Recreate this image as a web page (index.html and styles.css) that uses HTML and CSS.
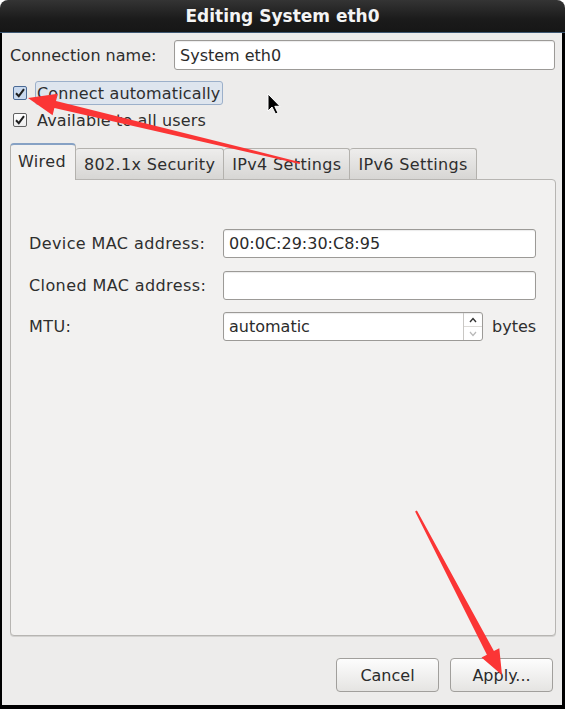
FILE: index.html
```html
<!DOCTYPE html>
<html>
<head>
<meta charset="utf-8">
<link rel="stylesheet" href="styles.css">
</head>
<body>
<div class="window">
  <div class="titlebar">Editing System eth0</div>
  <div class="body">
    <div class="name-row">
      <span class="name-label">Connection name:</span>
      <div class="entry">System eth0</div>
    </div>
    <div class="check-row first">
      <span class="checkbox hl"><svg viewBox="0 0 14 14" width="14" height="14"><path d="M3 7.2 L5.8 10.2 L11 3.2" fill="none" stroke="#1f1f1f" stroke-width="2"/></svg></span>
      <span class="check-label focused">Connect automatically</span>
    </div>
    <div class="check-row">
      <span class="checkbox"><svg viewBox="0 0 14 14" width="14" height="14"><path d="M3 7.2 L5.8 10.2 L11 3.2" fill="none" stroke="#1f1f1f" stroke-width="2"/></svg></span>
      <span class="check-label">Available to all users</span>
    </div>
    <div class="notebook">
      <div class="tabs">
        <div class="tab active">Wired</div>
        <div class="tab">802.1x Security</div>
        <div class="tab">IPv4 Settings</div>
        <div class="tab">IPv6 Settings</div>
      </div>
      <div class="panel">
        <div class="form">
          <span class="flabel">Device MAC address:</span>
          <div class="entry">00:0C:29:30:C8:95</div>
          <span class="flabel">Cloned MAC address:</span>
          <div class="entry"></div>
          <span class="flabel">MTU:</span>
          <div class="mtu">
            <div class="entry spin">
              <span class="spin-text">automatic</span>
              <span class="spin-btns">
                <span class="sb up"><svg viewBox="0 0 10 8" width="10" height="8"><path d="M2 6 L5 2.5 L8 6" fill="none" stroke="#333" stroke-width="1.4"/></svg></span>
                <span class="sb down"><svg viewBox="0 0 10 8" width="10" height="8"><path d="M2 2 L5 5.5 L8 2" fill="none" stroke="#b8b8b8" stroke-width="1.2"/></svg></span>
              </span>
            </div>
            <span class="unit">bytes</span>
          </div>
        </div>
      </div>
    </div>
    <div class="buttons">
      <div class="btn cancel">Cancel</div>
      <div class="btn apply">Apply...</div>
    </div>
  </div>
  <svg class="overlay" viewBox="0 0 565 709" width="565" height="709">
    <polygon fill="#fb3535" points="28,98 57.8,93.8 56,101.1 300.3,162.2 299.7,164 54.4,107.9 52.6,115.2"/>
    <polygon fill="#fb3535" points="502,675 499.3,648.3 493.9,651 416.9,510.5 415.1,511.5 486.9,654.8 481.5,657.5"/>
    <path d="M268 94 L268 111 L272 107 L275.5 114 L278 113 L274.8 106.3 L280 106.3 Z" fill="#000" stroke="#fff" stroke-width="1"/>
  </svg>
</div>
</body>
</html>
```
FILE: styles.css
```css
html, body {
  margin: 0;
  padding: 0;
  background: #ffffff;
}
body {
  font-family: "DejaVu Sans", "Liberation Sans", sans-serif;
  font-size: 16px;
  color: #2e2e2e;
}
.window {
  position: relative;
  width: 565px;
  height: 709px;
  display: flex;
  flex-direction: column;
}
.titlebar {
  height: 33px;
  box-sizing: border-box;
  flex: none;
  border-radius: 8px 8px 0 0;
  background: linear-gradient(#343434, #1b1b1b 60%, #161616);
  color: #f4f4f4;
  font-weight: bold;
  font-size: 17px;
  display: flex;
  align-items: center;
  justify-content: center;
  padding-bottom: 1px;
  border-bottom: 1px solid #3e5873;
}
.body {
  flex: 1;
  display: flex;
  flex-direction: column;
  background: #edeceb;
  border-left: 2px solid #000;
  border-right: 3px solid #000;
  border-bottom: 4px solid #000;
  padding: 7px 6px 0 8px;
  min-height: 0;
}
.name-row {
  display: flex;
  align-items: center;
  height: 30px;
}
.name-label {
  width: 164px;
  flex: none;
}
.entry {
  box-sizing: border-box;
  height: 30px;
  flex: 1;
  background: #fff;
  border: 1px solid #9c9a97;
  border-radius: 3px;
  box-shadow: inset 0 1px 1px rgba(0,0,0,0.08);
  display: flex;
  align-items: center;
  padding-left: 5px;
  color: #2b2b2b;
}
.name-row .entry {
  margin-right: 1px;
}
.check-row {
  display: flex;
  align-items: center;
  height: 24px;
  margin-top: 3px;
  padding-left: 3px;
}
.check-row.first {
  margin-top: 11px;
}
.checkbox {
  width: 14px;
  height: 14px;
  box-sizing: border-box;
  border: 1px solid #616161;
  border-radius: 2px;
  background: linear-gradient(#ffffff, #ededed);
  display: flex;
  align-items: center;
  justify-content: center;
  flex: none;
}
.checkbox svg {
  display: block;
  margin: -1px;
}
.checkbox.hl {
  background: #c9d9ee;
  border-color: #4b6a95;
}
.check-label {
  margin-left: 8px;
  padding: 0 2px 0 1px;
  height: 24px;
  box-sizing: border-box;
  display: flex;
  align-items: center;
  border: 1px solid transparent;
  letter-spacing: 0.15px;
}
.check-label.focused {
  background: #dee5ee;
  border-color: #9cb0ca;
  border-radius: 3px;
}
.notebook {
  flex: 1;
  display: flex;
  flex-direction: column;
  margin-top: 11px;
  min-height: 0;
}
.tabs {
  display: flex;
  align-items: flex-end;
  height: 36px;
  position: relative;
  z-index: 1;
}
.tab {
  box-sizing: border-box;
  height: 31px;
  padding: 0 8px 0 8px;
  display: flex;
  align-items: center;
  background: linear-gradient(#eeedec, #d7d6d4);
  border: 1px solid #b3b1ad;
  border-bottom: none;
  border-left: none;
  border-radius: 3px 3px 0 0;
  color: #2e2e2e;
  letter-spacing: 0.35px;
}
.tab.active {
  height: 37px;
  margin-bottom: -1px;
  padding: 0 9px 3px 7px;
  background: #f2f1f0;
  border: 1px solid #b3b1ad;
  border-top: 2px solid #86a1c4;
  border-bottom: none;
  border-radius: 4px 4px 0 0;
}
.panel {
  flex: 1;
  background: #f2f1f0;
  border: 1px solid #b7b5b2;
  border-radius: 0 4px 4px 4px;
  box-shadow: 0 1px 0 #d3d2d0;
}
.form {
  display: grid;
  grid-template-columns: 194px 1fr;
  grid-auto-rows: 29px;
  row-gap: 12.5px;
  align-items: center;
  padding: 49px 19px 0 18px;
}
.flabel {
  letter-spacing: 0.4px;
}
.form .entry {
  height: 29px;
}
.mtu {
  display: flex;
  align-items: center;
  height: 29px;
}
.entry.spin {
  flex: none;
  width: 260px;
  padding: 0;
  display: flex;
  align-items: stretch;
}
.spin-text {
  flex: 1;
  display: flex;
  align-items: center;
  padding-left: 5px;
}
.spin-btns {
  width: 18px;
  display: flex;
  flex-direction: column;
  border-left: 1px solid #c9c7c4;
}
.sb {
  flex: 1;
  display: flex;
  align-items: center;
  justify-content: center;
}
.sb svg {
  display: block;
}
.sb.up {
  border-bottom: 1px solid #dcdad7;
}
.unit {
  margin-left: 9px;
}
.buttons {
  display: flex;
  justify-content: flex-end;
  gap: 11px;
  margin: 22px 3px 13px 0;
}
.btn {
  box-sizing: border-box;
  height: 34px;
  display: flex;
  align-items: center;
  justify-content: center;
  background: linear-gradient(#fdfdfd, #e5e4e2);
  border: 1px solid #a19f9c;
  border-radius: 4px;
  color: #2b2b2b;
}
.btn.cancel {
  width: 103px;
}
.btn.apply {
  width: 103px;
}
.overlay {
  position: absolute;
  left: 0;
  top: 0;
  z-index: 10;
  pointer-events: none;
}
```
